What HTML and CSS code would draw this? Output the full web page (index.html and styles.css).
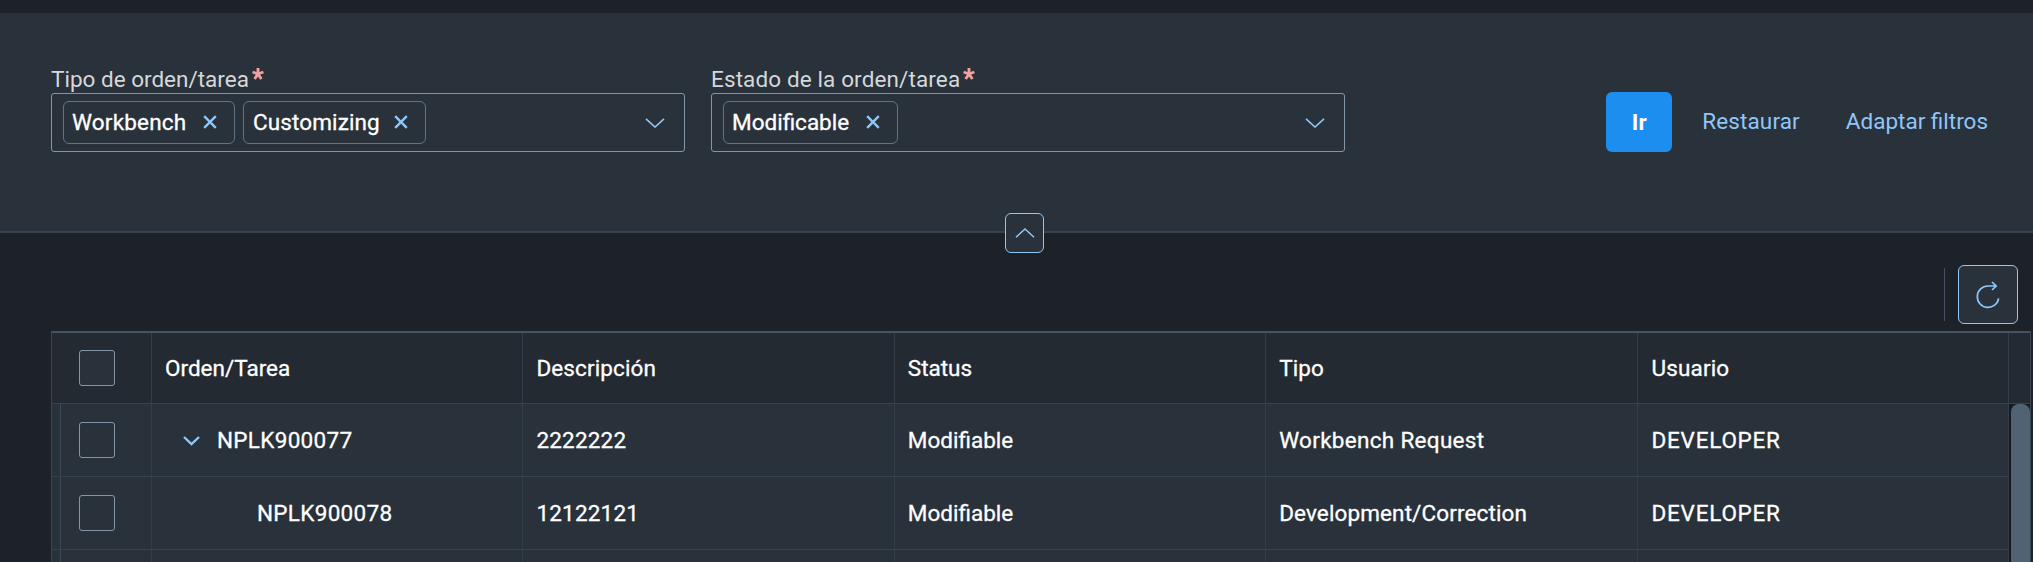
FILE: index.html
```
<!DOCTYPE html>
<html lang="es">
<head>
<meta charset="utf-8">
<title>Órdenes de transporte</title>
<link rel="stylesheet" href="styles.css">
</head>
<body>
<header class="filter-bar">
  <div class="field">
    <label class="label sp-0">Tipo de orden/tarea<svg class="required" viewBox="0 0 14 14"><path d="M7 7V1M7 7L1.6 5M7 7l5.4-2M7 7l-3.4 5M7 7l3.4 5"/></svg></label>
    <div class="input">
      <span class="token token-a"><span class="sp-2">Workbench</span><svg class="close" viewBox="0 0 14 14"><path d="M1.2 1.2l11.6 11.6M12.8 1.2L1.2 12.8"/></svg></span>
      <span class="token token-b"><span>Customizing</span><svg class="close" viewBox="0 0 14 14"><path d="M1.2 1.2l11.6 11.6M12.8 1.2L1.2 12.8"/></svg></span>
      <svg class="arrow" viewBox="0 0 20 10"><path d="M1 .8l9 8.2 9-8.2"/></svg>
    </div>
  </div>
  <div class="field">
    <label class="label">Estado de la orden/tarea<svg class="required" viewBox="0 0 14 14"><path d="M7 7V1M7 7L1.6 5M7 7l5.4-2M7 7l-3.4 5M7 7l3.4 5"/></svg></label>
    <div class="input">
      <span class="token token-c"><span class="sp-0">Modificable</span><svg class="close" viewBox="0 0 14 14"><path d="M1.2 1.2l11.6 11.6M12.8 1.2L1.2 12.8"/></svg></span>
      <svg class="arrow" viewBox="0 0 20 10"><path d="M1 .8l9 8.2 9-8.2"/></svg>
    </div>
  </div>
  <div class="actions">
    <button class="go">Ir</button>
    <button class="link">Restaurar</button>
    <button class="link link-adapt sp-0">Adaptar filtros</button>
  </div>
  <button class="collapse"><svg class="arrow-up" viewBox="0 0 20 10"><path d="M1 9.2L10 1l9 8.2"/></svg></button>
</header>
<div class="toolbar">
  <span class="separator"></span>
  <button class="refresh"><svg class="refresh-icon" viewBox="0 0 24 28"><path d="M22.6 17.3A10.7 10.7 0 1 1 12 5h8M16 1l4.2 4-4.2 4"/></svg></button>
</div>
<main class="table">
  <div class="row head">
    <div class="cell select"><span class="checkbox"></span></div>
    <div class="cell sp-0">Orden/Tarea</div>
    <div class="cell">Descripción</div>
    <div class="cell sp-0">Status</div>
    <div class="cell">Tipo</div>
    <div class="cell user">Usuario</div>
    <div class="corner"></div>
  </div>
  <div class="body">
    <div class="rows">
      <div class="row">
        <div class="cell select"><span class="marker"></span><span class="checkbox"></span></div>
        <div class="cell level-1 sp-3"><svg class="expand" viewBox="0 0 17 10"><path d="M1 1l7.5 7.2L16 1"/></svg>NPLK900077</div>
        <div class="cell sp-2">2222222</div>
        <div class="cell sp-0">Modifiable</div>
        <div class="cell sp-3">Workbench Request</div>
        <div class="cell user sp-7">DEVELOPER</div>
      </div>
      <div class="row">
        <div class="cell select"><span class="marker"></span><span class="checkbox"></span></div>
        <div class="cell level-2 sp-3">NPLK900078</div>
        <div class="cell sp-2">12122121</div>
        <div class="cell sp-0">Modifiable</div>
        <div class="cell">Development/Correction</div>
        <div class="cell user sp-7">DEVELOPER</div>
      </div>
      <div class="row">
        <div class="cell select"><span class="marker"></span></div>
        <div class="cell"></div>
        <div class="cell"></div>
        <div class="cell"></div>
        <div class="cell"></div>
        <div class="cell"></div>
      </div>
    </div>
    <div class="scroll"><div class="thumb"></div></div>
  </div>
</main>
</body>
</html>
```
FILE: styles.css
```
* { box-sizing: border-box; }
html { overflow: hidden; }
body {
  margin: 0;
  height: 562px;
  padding-top: 13px;
  overflow: hidden;
  display: flex;
  flex-direction: column;
  background: #1d2229;
  color: #fff;
  font: 22.5px/28px Roboto, "Noto Sans", sans-serif;
  letter-spacing: .12px;
}
button {
  margin: 0;
  padding: 0;
  border: 0;
  background: none;
  color: #8fc7f8;
  font: inherit;
  letter-spacing: .12px;
}
svg { fill: none; stroke: #8fc7f8; flex: none; display: block; }
.sp-0 { letter-spacing: 0; }
.sp-2 { letter-spacing: .2px; }
.sp-3 { letter-spacing: .3px; }
.sp-7 { letter-spacing: .75px; }

.filter-bar {
  position: relative;
  flex: none;
  height: 220px;
  padding: 52px 45px 0 51px;
  display: flex;
  gap: 26px;
  background: #29313a;
  border-bottom: 2px solid #36424e;
}
.field { width: 634px; }
.label { display: flex; height: 28px; color: #d5d8db; }
.required { width: 14px; height: 14px; margin: 2px 0 0 2px; stroke: #f1a0a0; stroke-width: 2.9; }
.input {
  height: 59px;
  padding: 0 19px 0 11px;
  display: flex;
  align-items: center;
  gap: 8px;
  border: 1px solid #8396a8;
  border-radius: 3px;
}
.token {
  height: 43px;
  padding: 0 17px 1px 8px;
  display: flex;
  align-items: center;
  justify-content: space-between;
  border: 1px solid #5f7489;
  border-radius: 6px;
  -webkit-text-stroke: .3px;
}
.token-a { width: 172px; }
.token-b { width: 183px; padding-left: 9px; }
.token-c { width: 175px; }
.close { width: 14px; height: 14px; stroke-width: 2.4; }
.arrow { width: 20px; height: 10px; margin: 1px 0 0 auto; stroke-width: 1.6; }
.actions { margin-left: auto; padding-top: 27px; display: flex; align-items: flex-start; }
.go {
  width: 66px;
  height: 60px;
  border-radius: 6px;
  background: #1b8eef;
  color: #fff;
  font-weight: 700;
}
.link { height: 58px; margin-left: 30px; }
.link-adapt { margin-left: 46px; letter-spacing: 0; }
.collapse {
  position: absolute;
  left: 1005px;
  top: 200px;
  width: 39px;
  height: 40px;
  display: flex;
  align-items: center;
  justify-content: center;
  background: #29313a;
  border: 1px solid #8fc7f8;
  border-radius: 6px;
}
.arrow-up { width: 20px; height: 10px; stroke-width: 1.5; }

.toolbar {
  flex: none;
  height: 98px;
  padding: 32px 15px 0 0;
  display: flex;
  justify-content: flex-end;
  gap: 13px;
}
.separator { width: 1px; height: 53px; margin-top: 3px; background: #45515e; }
.refresh {
  width: 60px;
  height: 59px;
  display: flex;
  align-items: center;
  justify-content: center;
  background: #29313a;
  border: 1px solid #8fc7f8;
  border-radius: 6px;
}
.refresh-icon { width: 24px; height: 28px; stroke-width: 1.7; }

.table {
  flex: 1;
  margin: 0 2px 0 51px;
  border: 1px solid #3a4652;
  border-top: 2px solid #45525f;
  border-bottom: 0;
  -webkit-text-stroke: .3px;
}
.row {
  display: grid;
  grid-template-columns: 100px repeat(5, 371.4px) 1fr;
  height: 73px;
  background: #29313a;
  border-bottom: 1px solid #35414c;
}
.head { height: 71px; background: #232a31; border-color: #36434f; }
.cell {
  display: flex;
  align-items: center;
  padding: 0 0 0 13px;
  border-right: 1px solid #323d48;
  white-space: nowrap;
}
.cell.user { padding-left: 14px; }
.select { padding-left: 27px; }
.marker {
  align-self: stretch;
  width: 9px;
  margin: 0 18px 0 -27px;
  background: #27323b;
  border-right: 1px solid #3d4a56;
}
.checkbox {
  width: 36px;
  height: 36px;
  border: 1px solid #8396a8;
  border-radius: 3px;
  background: #29313a;
}
.expand { width: 17px; height: 10px; margin: 2px 17px 0 0; stroke-width: 2.4; }
.cell.level-1 { padding-left: 31px; }
.cell.level-2 { padding-left: 105px; }
.body { display: flex; height: 158px; overflow: hidden; }
.rows { flex: none; width: 1957px; }
.scroll { flex: 1; padding-left: 2px; background: #171b20; }
.thumb { height: 180px; border-radius: 8px; background: #506273; }
```
